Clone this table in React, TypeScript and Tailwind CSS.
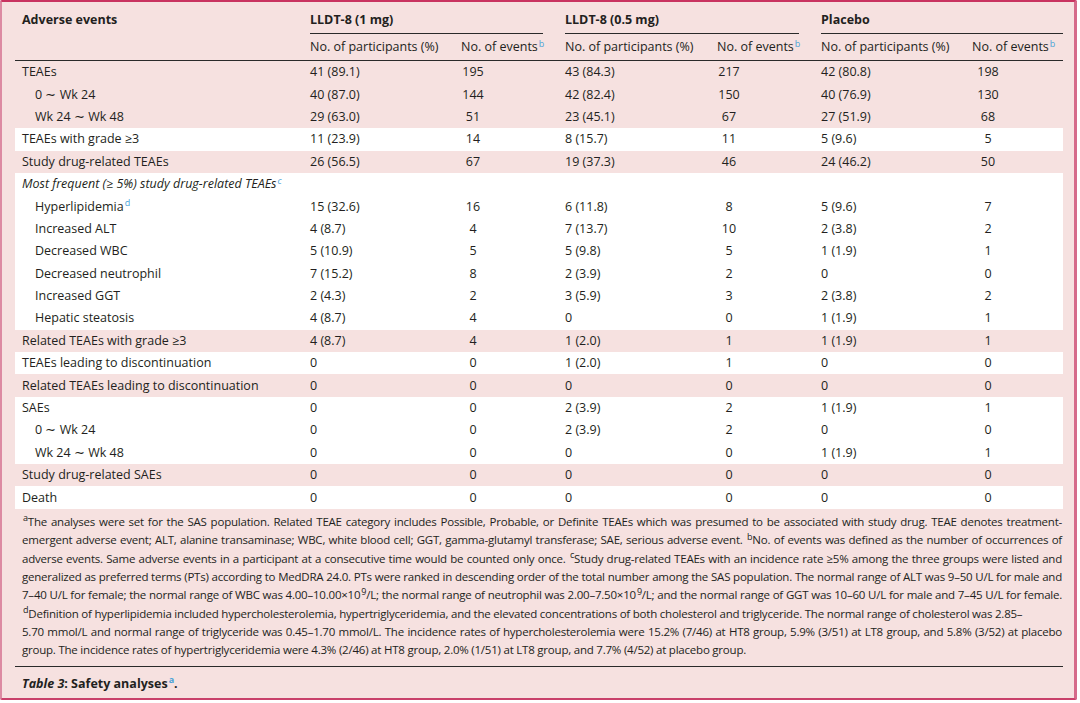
import type { ReactNode } from "react";

type Linha = {
    rotulo: ReactNode;
    recuo?: boolean;
    valores?: string[];
};

type Grupo = {
    branco: boolean;
    linhas: Linha[];
};

const Sup = ({ children, azul = true }: { children: ReactNode; azul?: boolean }) => (
    <sup className={`text-[9px] ml-[1px] ${azul ? "text-[#4aa3d8]" : "text-[#231f20]"}`}>
        {children}
    </sup>
);

const grupos: Grupo[] = [
    {
        branco: false,
        linhas: [
            { rotulo: "TEAEs", valores: ["41 (89.1)", "195", "43 (84.3)", "217", "42 (80.8)", "198"] },
            { rotulo: "0 ∼ Wk 24", recuo: true, valores: ["40 (87.0)", "144", "42 (82.4)", "150", "40 (76.9)", "130"] },
            { rotulo: "Wk 24 ∼ Wk 48", recuo: true, valores: ["29 (63.0)", "51", "23 (45.1)", "67", "27 (51.9)", "68"] },
        ],
    },
    {
        branco: true,
        linhas: [{ rotulo: "TEAEs with grade ≥3", valores: ["11 (23.9)", "14", "8 (15.7)", "11", "5 (9.6)", "5"] }],
    },
    {
        branco: false,
        linhas: [{ rotulo: "Study drug-related TEAEs", valores: ["26 (56.5)", "67", "19 (37.3)", "46", "24 (46.2)", "50"] }],
    },
    {
        branco: true,
        linhas: [
            {
                rotulo: (
                    <span className="italic">
                        Most frequent (≥ 5%) study drug-related TEAEs<Sup>c</Sup>
                    </span>
                ),
            },
            {
                rotulo: (
                    <>
                        Hyperlipidemia<Sup>d</Sup>
                    </>
                ),
                recuo: true,
                valores: ["15 (32.6)", "16", "6 (11.8)", "8", "5 (9.6)", "7"],
            },
            { rotulo: "Increased ALT", recuo: true, valores: ["4 (8.7)", "4", "7 (13.7)", "10", "2 (3.8)", "2"] },
            { rotulo: "Decreased WBC", recuo: true, valores: ["5 (10.9)", "5", "5 (9.8)", "5", "1 (1.9)", "1"] },
            { rotulo: "Decreased neutrophil", recuo: true, valores: ["7 (15.2)", "8", "2 (3.9)", "2", "0", "0"] },
            { rotulo: "Increased GGT", recuo: true, valores: ["2 (4.3)", "2", "3 (5.9)", "3", "2 (3.8)", "2"] },
            { rotulo: "Hepatic steatosis", recuo: true, valores: ["4 (8.7)", "4", "0", "0", "1 (1.9)", "1"] },
        ],
    },
    {
        branco: false,
        linhas: [{ rotulo: "Related TEAEs with grade ≥3", valores: ["4 (8.7)", "4", "1 (2.0)", "1", "1 (1.9)", "1"] }],
    },
    {
        branco: true,
        linhas: [{ rotulo: "TEAEs leading to discontinuation", valores: ["0", "0", "1 (2.0)", "1", "0", "0"] }],
    },
    {
        branco: false,
        linhas: [{ rotulo: "Related TEAEs leading to discontinuation", valores: ["0", "0", "0", "0", "0", "0"] }],
    },
    {
        branco: true,
        linhas: [
            { rotulo: "SAEs", valores: ["0", "0", "2 (3.9)", "2", "1 (1.9)", "1"] },
            { rotulo: "0 ∼ Wk 24", recuo: true, valores: ["0", "0", "2 (3.9)", "2", "0", "0"] },
            { rotulo: "Wk 24 ∼ Wk 48", recuo: true, valores: ["0", "0", "0", "0", "1 (1.9)", "1"] },
        ],
    },
    {
        branco: false,
        linhas: [{ rotulo: "Study drug-related SAEs", valores: ["0", "0", "0", "0", "0", "0"] }],
    },
    {
        branco: true,
        linhas: [{ rotulo: "Death", valores: ["0", "0", "0", "0", "0", "0"] }],
    },
];

const colunas = "grid grid-cols-[295px_151px_104px_152px_104px_151px_91px]";

const Cabecalho = () => (
    <div className="border-b border-[#2a2a2a]">
        <div className={`${colunas} h-[32px] items-start pt-[10px] font-bold`}>
            <div className="pl-[7px]">Adverse events</div>
            <div className="col-span-2 mr-[22px] border-b border-[#2a2a2a] h-[22px]">LLDT-8 (1 mg)</div>
            <div className="col-span-2 mr-[22px] border-b border-[#2a2a2a] h-[22px]">LLDT-8 (0.5 mg)</div>
            <div className="col-span-2 border-b border-[#2a2a2a] h-[22px]">Placebo</div>
        </div>
        <div className={`${colunas} h-[26px] items-center`}>
            <div />
            <div>No. of participants (%)</div>
            <div>
                No. of events<Sup>b</Sup>
            </div>
            <div>No. of participants (%)</div>
            <div>
                No. of events<Sup>b</Sup>
            </div>
            <div>No. of participants (%)</div>
            <div>
                No. of events<Sup>b</Sup>
            </div>
        </div>
    </div>
);

const LinhaTabela = ({ linha }: { linha: Linha }) => (
    <div className={`${colunas} h-[22.4px] items-center`}>
        <div className={linha.recuo ? "pl-[20px]" : "pl-[7px]"}>{linha.rotulo}</div>
        {linha.valores?.map((v, i) =>
            i % 2 === 0 ? (
                <div key={i}>{v}</div>
            ) : (
                <div key={i} className={i === 5 ? "pl-[4px]" : ""}>
                    <span className="inline-block w-[24px] text-center">{v}</span>
                </div>
            )
        )}
    </div>
);

const notas: { texto: ReactNode; justificar: boolean }[] = [
    {
        texto: (
            <>
                <Sup azul={false}>a</Sup>The analyses were set for the SAS population. Related TEAE category includes Possible, Probable, or Definite TEAEs which was presumed to be associated with study drug. TEAE denotes treatment-
            </>
        ),
        justificar: true,
    },
    {
        texto: (
            <>
                emergent adverse event; ALT, alanine transaminase; WBC, white blood cell; GGT, gamma-glutamyl transferase; SAE, serious adverse event. <Sup azul={false}>b</Sup>No. of events was defined as the number of occurrences of
            </>
        ),
        justificar: true,
    },
    {
        texto: (
            <>
                adverse events. Same adverse events in a participant at a consecutive time would be counted only once. <Sup azul={false}>c</Sup>Study drug-related TEAEs with an incidence rate ≥5% among the three groups were listed and
            </>
        ),
        justificar: true,
    },
    {
        texto: "generalized as preferred terms (PTs) according to MedDRA 24.0. PTs were ranked in descending order of the total number among the SAS population. The normal range of ALT was 9–50 U/L for male and",
        justificar: true,
    },
    {
        texto: (
            <>
                7–40 U/L for female; the normal range of WBC was 4.00–10.00×10<Sup azul={false}>9</Sup>/L; the normal range of neutrophil was 2.00–7.50×10<Sup azul={false}>9</Sup>/L; and the normal range of GGT was 10–60 U/L for male and 7–45 U/L for female.
            </>
        ),
        justificar: true,
    },
    {
        texto: (
            <>
                <Sup azul={false}>d</Sup>Definition of hyperlipidemia included hypercholesterolemia, hypertriglyceridemia, and the elevated concentrations of both cholesterol and triglyceride. The normal range of cholesterol was 2.85–
            </>
        ),
        justificar: false,
    },
    {
        texto: "5.70 mmol/L and normal range of triglyceride was 0.45–1.70 mmol/L. The incidence rates of hypercholesterolemia were 15.2% (7/46) at HT8 group, 5.9% (3/51) at LT8 group, and 5.8% (3/52) at placebo",
        justificar: true,
    },
    {
        texto: "group. The incidence rates of hypertriglyceridemia were 4.3% (2/46) at HT8 group, 2.0% (1/51) at LT8 group, and 7.7% (4/52) at placebo group.",
        justificar: false,
    },
];

const App = () => {
    return (
        <main className="w-[1080px] h-[703px] bg-white">
            <div
                className="w-[1077px] h-[700px] bg-[#f6e1e0] border-t-2 border-t-[#c93360] border-l-2 border-l-[#dc8aa2] border-r-[3px] border-r-[#d56a8a] border-b-2 border-b-[#c9406a] rounded-[2px] pl-[13px] pr-[9px] text-[12.5px] text-[#231f20] font-['Open_Sans',sans-serif] leading-[16px]"
            >
                <div className="w-[1048px]">
                    <Cabecalho />
                    {grupos.map((grupo, gi) => (
                        <div key={gi} className={grupo.branco ? "bg-white" : ""}>
                            {grupo.linhas.map((linha, li) => (
                                <LinhaTabela key={li} linha={linha} />
                            ))}
                        </div>
                    ))}

                    <div className="mt-[4px] pl-[7px] pr-[1px] text-[11.5px] tracking-[-0.22px] leading-[18.35px]">
                        {notas.map((nota, i) => (
                            <div
                                key={i}
                                className={`whitespace-nowrap ${nota.justificar ? "text-justify [text-align-last:justify]" : ""}`}
                            >
                                {nota.texto}
                            </div>
                        ))}
                    </div>

                    <div className="mt-[6px] border-t border-[#2a2a2a] pt-[8px] px-[7px] font-bold leading-[18px]">
                        <span className="italic">Table 3</span>: Safety analyses<Sup>a</Sup>.
                    </div>
                </div>
            </div>
        </main>
    );
};

export default App;
